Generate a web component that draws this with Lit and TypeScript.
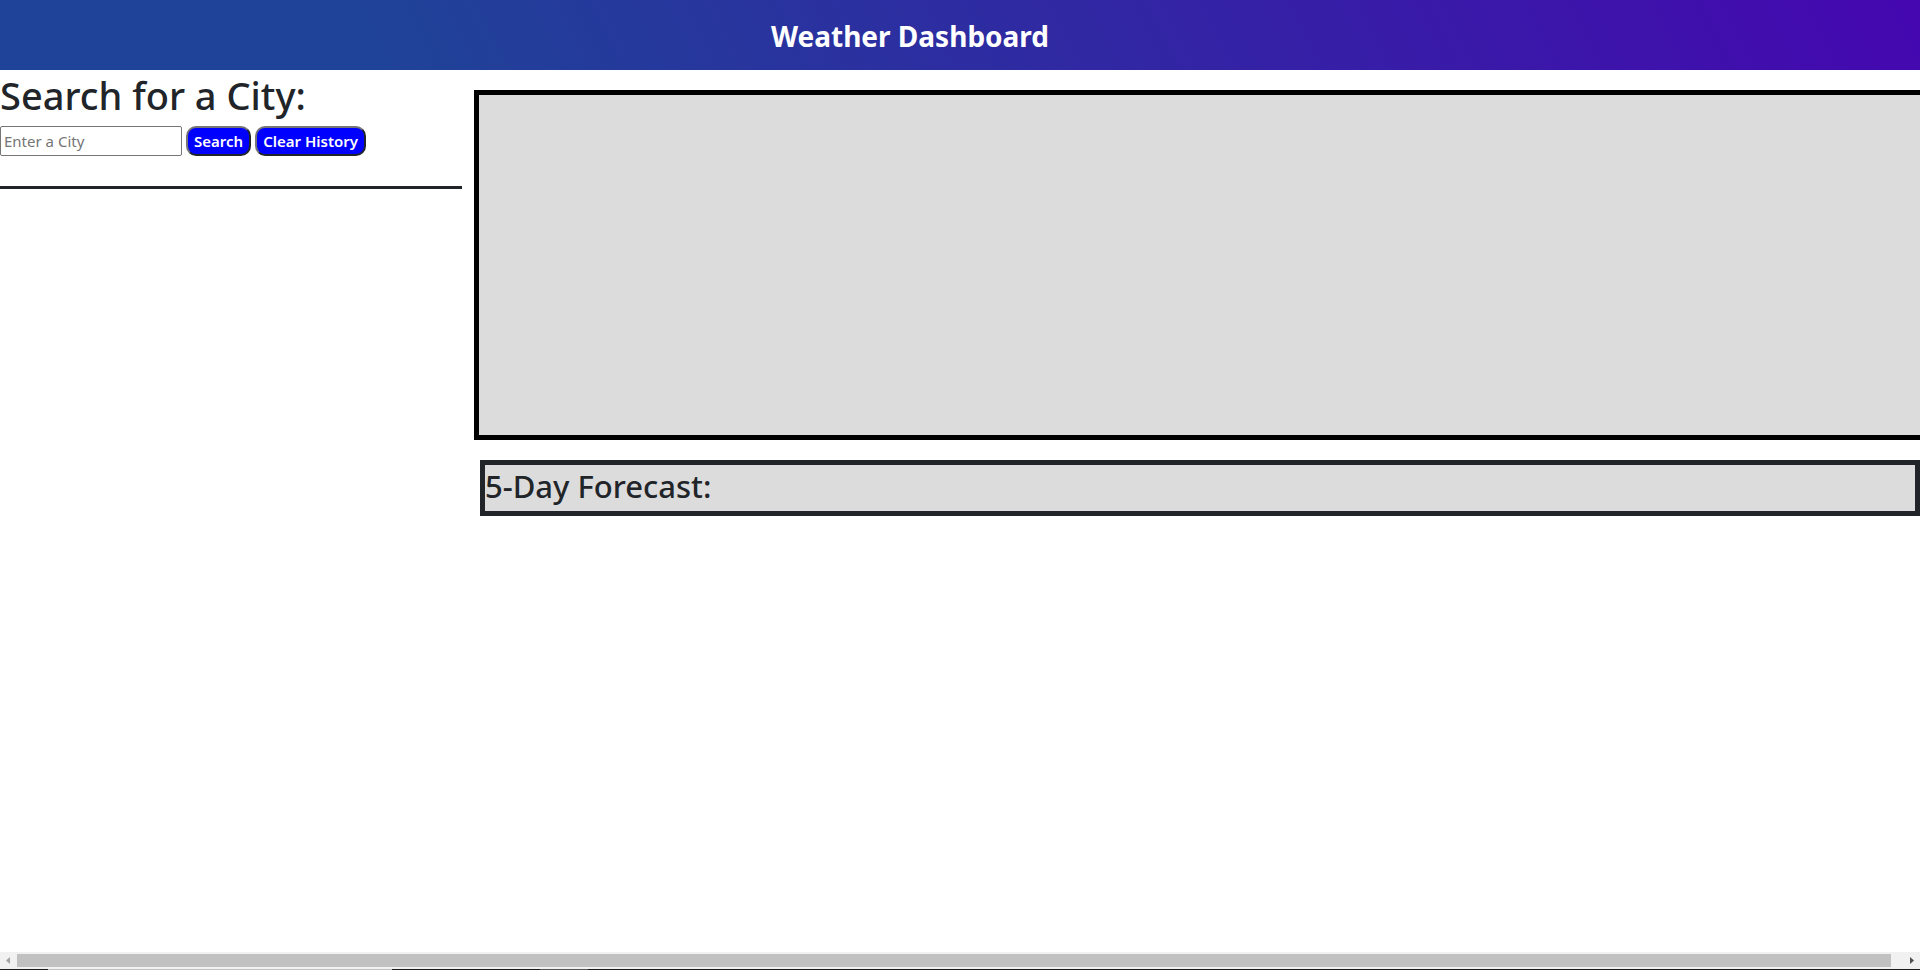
import { LitElement, html, css } from "lit";
import { customElement, state } from "lit/decorators.js";

@customElement("app-root")
export class AppRoot extends LitElement {
  static styles = css`
    :host {
      display: flex;
      flex-direction: column;
      min-height: 100vh;
      overflow: hidden;
      background: #fff;
      color: #212529;
      font: 16px/24px "Noto Sans", "Open Sans", sans-serif;
    }
    * {
      box-sizing: border-box;
    }
    h1,
    h2,
    h3 {
      margin: 0;
      font-weight: 500;
    }
    .header {
      padding: 17px 100px 15px 0;
      background: linear-gradient(64deg, #1f4398 20%, #4507b0 100%);
      color: #fff;
      text-align: center;
    }
    .title {
      font-size: 28px;
      line-height: 38px;
      font-weight: 700;
    }
    .main {
      flex: 1;
      display: grid;
      grid-template-columns: minmax(0, 462px) minmax(0, 1fr);
      column-gap: 12px;
      align-items: start;
    }
    .heading {
      font-size: 38px;
      line-height: 50px;
    }
    .search {
      display: flex;
      gap: 4px;
      padding: 6px 0 30px;
      border-bottom: 3px solid #212529;
    }
    .city {
      width: 182px;
      height: 30px;
      padding: 1px 3px;
      border: 1px solid #767676;
      border-radius: 2px;
      font: inherit;
      font-size: 15px;
    }
    .city::placeholder {
      color: #757575;
    }
    .button {
      height: 30px;
      padding: 0 6px;
      border: 2px solid;
      border-color: #767676 #212529 #212529 #767676;
      border-radius: 10px;
      background: #00f;
      color: #fff;
      font: inherit;
      font-size: 15px;
      font-weight: 600;
      white-space: nowrap;
    }
    .weather {
      padding-top: 20px;
    }
    .current {
      height: 350px;
      margin-right: -5px;
      border: 5px solid #000;
      background: #dcdcdc;
    }
    .forecast {
      margin: 20px 0 0 6px;
      padding: 2px 0 6px;
      border: 5px solid #212529;
      background: #dcdcdc;
    }
    .subheading {
      font-size: 31px;
      line-height: 38px;
    }
    .scrollbar {
      display: flex;
      align-items: center;
      height: 17px;
      background: #f1f1f1;
    }
    .thumb {
      flex: 1;
      height: 13px;
      margin-right: 12px;
      background: #c1c1c1;
    }
    .arrow {
      display: block;
      width: 17px;
      height: 17px;
    }
    .edge {
      display: grid;
      grid-template-columns: 48px 344px 148px 48px 1fr;
      height: 1px;
      background: #1f1b1f;
    }
    .tab {
      grid-column: 2;
      background: #c1c1c1;
    }
    .tab-dim {
      grid-column: 4;
      background: #555;
    }
  `;

  @state() private city = "";

  private onInput(e: Event) {
    this.city = (e.target as HTMLInputElement).value;
  }

  private clear() {
    this.city = "";
  }

  render() {
    return html`
      <header class="header"><h1 class="title">Weather Dashboard</h1></header>
      <main class="main">
        <section>
          <h2 class="heading"><label for="city">Search for a City:</label></h2>
          <form class="search" @submit=${(e: Event) => e.preventDefault()}>
            <input id="city" class="city" type="text" placeholder="Enter a City" .value=${this.city} @input=${this.onInput} />
            <button class="button" type="submit">Search</button>
            <button class="button" type="button" @click=${this.clear}>Clear History</button>
          </form>
        </section>
        <section class="weather">
          <div class="current"></div>
          <div class="forecast"><h3 class="subheading">5-Day Forecast:</h3></div>
        </section>
      </main>
      <div class="scrollbar" aria-hidden="true">
        <svg class="arrow" viewBox="0 0 17 17"><path d="M10 5v7L6 8.500z" fill="#a3a3a3" /></svg>
        <div class="thumb"></div>
        <svg class="arrow" viewBox="0 0 17 17"><path d="M7 5v7l4-3.500z" fill="#505050" /></svg>
      </div>
      <div class="edge" aria-hidden="true"><span class="tab"></span><span class="tab-dim"></span></div>
    `;
  }
}
